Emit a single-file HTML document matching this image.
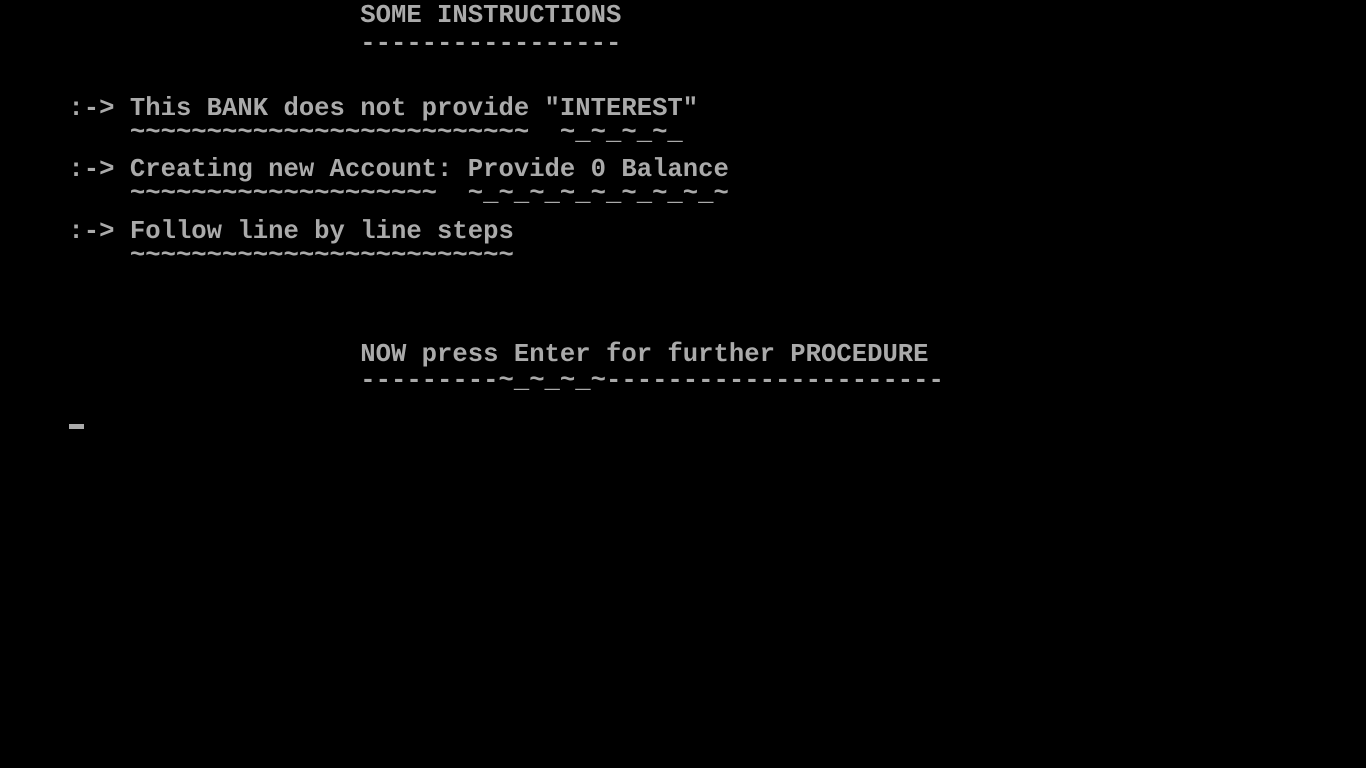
<!DOCTYPE html>
<html><head><meta charset="utf-8"><style>
html,body{margin:0;padding:0;background:#000;width:1366px;height:768px;overflow:hidden}
.r{position:absolute;left:7px;white-space:pre;font-family:"Liberation Mono",monospace;font-size:25.6px;font-weight:bold;line-height:30.72px;color:#aaaaaa;margin:0}
.c{position:absolute;left:69px;top:424px;width:15px;height:5px;background:#aaaaaa}
</style></head><body>
<div class="r" style="top:1px">                       SOME INSTRUCTIONS</div>
<div class="r" style="top:29px">                       -----------------</div>
<div class="r" style="top:94px">    :-&gt; This BANK does not provide "INTEREST"</div>
<div class="r" style="top:118px">        ~~~~~~~~~~~~~~~~~~~~~~~~~~  ~_~_~_~_</div>
<div class="r" style="top:155px">    :-&gt; Creating new Account: Provide 0 Balance</div>
<div class="r" style="top:179px">        ~~~~~~~~~~~~~~~~~~~~  ~_~_~_~_~_~_~_~_~</div>
<div class="r" style="top:217px">    :-&gt; Follow line by line steps</div>
<div class="r" style="top:241px">        ~~~~~~~~~~~~~~~~~~~~~~~~~</div>
<div class="r" style="top:340px">                       NOW press Enter for further PROCEDURE</div>
<div class="r" style="top:366px">                       ---------~_~_~_~----------------------</div>
<div class="c"></div>
</body></html>
